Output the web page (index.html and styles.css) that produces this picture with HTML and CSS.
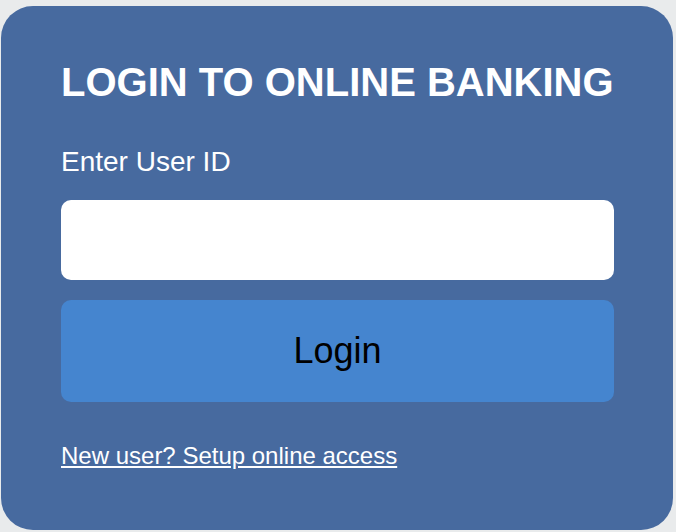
FILE: index.html
```html
<!DOCTYPE html>
<html lang="en">

<head>
    <meta charset="UTF-8">
    <meta name="viewport" content="width=device-width, initial-scale=1.0">
    <link rel="stylesheet" href="styles.css">
    <title>Online Banking</title>
</head>

<body>
    <div class="login-box">
        <h1 class="login-title">LOGIN TO ONLINE BANKING</h1>
        <form class="login-form">
            <label for="user-id">Enter User ID</label>
            <input type="text" id="user-id">
            <button type="submit" id="login-btn">Login</button>
        </form>
        <a href="#" class="setup-link">New user? Setup online access</a>
    </div>
</body>

</html>
```

FILE: styles.css
```css
* {
    margin: 0;
    padding: 0;
    box-sizing: border-box;
    font-family: 'Liberation Sans', Arial, sans-serif;
}

body {
    background: #e9ebec;
    padding: 6px 3px 2px 1px;
}

.login-box {
    height: 524px;
    padding: 54px 59px 0 60px;
    background: #476a9f;
    border-radius: 32px;
}

.login-title {
    color: #fff;
    font-size: 40px;
    font-weight: bold;
}

.login-form {
    display: flex;
    flex-direction: column;
}

.login-form label {
    margin-top: 41px;
    color: #fff;
    font-size: 28px;
}

#user-id {
    margin-top: 22px;
    height: 80px;
    padding: 0 16px;
    font-size: 24px;
    border: none;
    outline: none;
    background: #fff;
    border-radius: 10px;
}

#login-btn {
    margin-top: 20px;
    height: 102px;
    color: #000;
    font-size: 36px;
    border: none;
    background: #4585cf;
    border-radius: 10px;
    cursor: pointer;
}

.setup-link {
    display: inline-block;
    margin-top: 40px;
    color: #fff;
    font-size: 24px;
}
```
